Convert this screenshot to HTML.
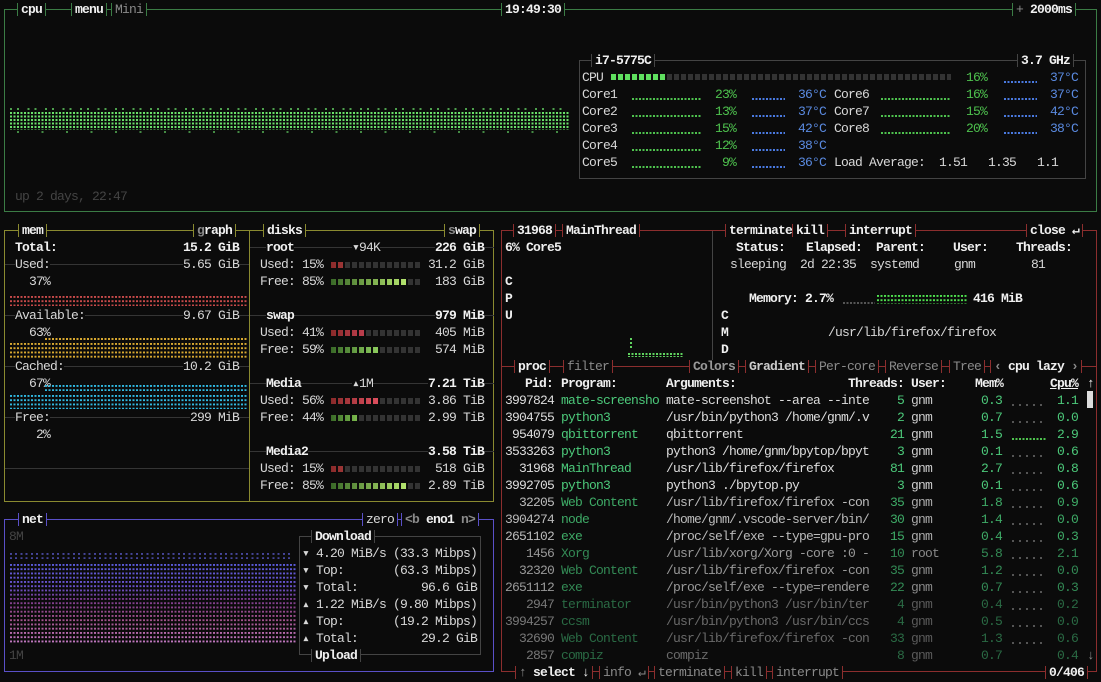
<!DOCTYPE html>
<html><head><meta charset="utf-8"><style>
*{margin:0;padding:0;box-sizing:border-box}
body{width:1101px;height:682px;background:#0b0b0b;overflow:hidden;position:relative;font-family:"Liberation Mono","DejaVu Sans Mono",monospace;font-size:13px;letter-spacing:-0.8px;color:#d8d8d8}
div,span.a{position:absolute;white-space:pre;line-height:17px}
.b{font-weight:bold;color:#f0f0f0}
.g{color:#8a8a8a}
.dg{color:#444}
.box{border:1px solid;}
.tt{position:absolute;height:13px;line-height:13px;margin-top:2px;padding:0 3px;background:#0b0b0b;border-left:1px solid;border-right:1px solid;white-space:pre}
.cg{border-color:#3b7c45}.my{border-color:#8a8a30}.nb{border-color:#5a50c8}.pr{border-color:#8c2e2e}
.hl{height:1px;background:#353535}
.dots{-webkit-mask:linear-gradient(#000 0 2px,transparent 2px) 0 0/100% 4.25px;}
.sq{-webkit-mask:linear-gradient(90deg,#000 0 5px,transparent 5px) 0 0/7px 100%;height:6px}
.bd{height:2px;-webkit-mask:linear-gradient(90deg,#000 0 2px,transparent 2px) 0 0/3.5px 100%}
.gr{color:#4ec24e}.bl{color:#5a8ae0}
</style></head><body>

<!-- CPU box -->
<div class="box cg" style="left:4px;top:9px;width:1093px;height:203px"></div>
<span class="tt cg b" style="left:17px;top:1px">cpu</span>
<span class="tt cg b" style="left:71px;top:1px">menu</span>
<span class="tt cg g" style="left:111px;top:1px">Mini</span>
<span class="tt cg b" style="left:501px;top:1px">19:49:30</span>
<span class="tt cg b" style="left:1012px;top:1px"><span class="g" style="font-weight:normal">+</span> 2000ms</span>
<div class="dots" style="left:10px;top:112px;width:560px;height:18px;background:linear-gradient(90deg,#6ae06a 0 2px,transparent 2px) 0 0/3.5px 100%;-webkit-mask:linear-gradient(#000 0 2px,transparent 2px) 0 0/100% 3.5px"></div>
<div class="dots" style="left:10px;top:108px;width:560px;height:3px;opacity:.7;background:linear-gradient(90deg,#6ae06a 0 2px,transparent 2px 7px,#6ae06a 7px 9px,transparent 9px) 0 0/17.5px 100%"></div>
<div class="dots" style="left:10px;top:131px;width:560px;height:3px;opacity:.6;background:linear-gradient(90deg,transparent 0 7px,#6ae06a 7px 9px,transparent 9px) 0 0/24.5px 100%"></div>
<div class="dg" style="left:15px;top:188px">up 2 days, 22:47</div>

<div class="box" style="border-color:#444;left:579px;top:60px;width:507px;height:119px"></div>
<span class="tt b" style="border-color:#444;left:591px;top:52px">i7-5775C</span>
<span class="tt b" style="border-color:#444;left:1017px;top:52px">3.7 GHz</span>
<div style="left:582px;top:69px">CPU</div>
<div class="sq" style="left:611px;top:74px;width:340px;background:linear-gradient(90deg,#5fe05f 0 56px,#333 56px)"></div>
<div class="gr" style="left:966px;top:69px">16%</div>
<div class="bd" style="left:1004px;top:81px;width:33px;background:#4a7ae0"></div>
<div class="bl" style="left:1050px;top:69px">37°C</div>

<div style="left:582px;top:86px">Core1
Core2
Core3
Core4
Core5</div>
<div style="left:834px;top:86px">Core6
Core7
Core8</div>
<div class="bd" style="left:632px;top:98px;width:70px;background:#4ec24e"></div>
<div class="bd" style="left:632px;top:115px;width:70px;background:#4ec24e"></div>
<div class="bd" style="left:632px;top:132px;width:70px;background:#4ec24e"></div>
<div class="bd" style="left:632px;top:149px;width:70px;background:#4ec24e"></div>
<div class="bd" style="left:632px;top:166px;width:70px;background:#4ec24e"></div>
<div class="bd" style="left:881px;top:98px;width:70px;background:#4ec24e"></div>
<div class="bd" style="left:881px;top:115px;width:70px;background:#4ec24e"></div>
<div class="bd" style="left:881px;top:132px;width:70px;background:#4ec24e"></div>
<div class="gr" style="left:715px;top:86px">23%
13%
15%
12%
 9%</div>
<div class="gr" style="left:966px;top:86px">16%
15%
20%</div>
<div class="bd" style="left:752px;top:98px;width:33px;background:#4a7ae0"></div>
<div class="bd" style="left:752px;top:115px;width:33px;background:#4a7ae0"></div>
<div class="bd" style="left:752px;top:132px;width:33px;background:#4a7ae0"></div>
<div class="bd" style="left:752px;top:149px;width:33px;background:#4a7ae0"></div>
<div class="bd" style="left:752px;top:166px;width:33px;background:#4a7ae0"></div>
<div class="bd" style="left:1004px;top:98px;width:33px;background:#4a7ae0"></div>
<div class="bd" style="left:1004px;top:115px;width:33px;background:#4a7ae0"></div>
<div class="bd" style="left:1004px;top:132px;width:33px;background:#4a7ae0"></div>
<div class="bl" style="left:798px;top:86px">36°C
37°C
42°C
38°C
36°C</div>
<div class="bl" style="left:1050px;top:86px">37°C
42°C
38°C</div>
<div style="left:834px;top:154px">Load Average:  1.51   1.35   1.1</div>

<!-- MEM box -->
<div class="box my" style="left:4px;top:230px;width:490px;height:272px"></div>
<div style="left:249px;top:230px;width:1px;height:272px;background:#8a8a30"></div>
<span class="tt my b" style="left:18px;top:222px">mem</span>
<span class="tt my b" style="left:193px;top:222px"><span class="g">g</span>raph</span>
<span class="tt my b" style="left:263px;top:222px">disks</span>
<span class="tt my b" style="left:444px;top:222px"><span class="g">s</span>wap</span>
<div class="hl" style="left:5px;top:264px;width:244px"></div>
<div class="hl" style="left:5px;top:315px;width:244px"></div>
<div class="hl" style="left:5px;top:366px;width:244px"></div>
<div class="hl" style="left:5px;top:417px;width:244px"></div>
<div class="hl" style="left:5px;top:468px;width:244px"></div>
<div class="b" style="left:15px;top:239px">Total:</div><div class="b" style="right:862px;top:239px">15.2 GiB</div>
<div style="left:15px;top:256px;background:#0b0b0b">Used:</div><div style="right:862px;top:256px;background:#0b0b0b">5.65 GiB</div>
<div style="left:22px;top:273px"> 37%</div>
<div class="dots" style="left:10px;top:296px;width:238px;height:10px;background:linear-gradient(90deg,#c84a4a 0 2px,transparent 2px) 0 0/3.5px 100%"></div>
<div style="left:15px;top:307px;background:#0b0b0b">Available:</div><div style="right:862px;top:307px;background:#0b0b0b">9.67 GiB</div>
<div style="left:22px;top:324px"> 63%</div>
<div class="dots" style="left:45px;top:338px;width:203px;height:2px;background:linear-gradient(90deg,#d8a830 0 2px,transparent 2px) 0 0/3.5px 100%"></div>
<div class="dots" style="left:10px;top:343px;width:238px;height:15px;background:linear-gradient(90deg,#d8a830 0 2px,transparent 2px) 0 0/3.5px 100%"></div>
<div style="left:15px;top:358px;background:#0b0b0b">Cached:</div><div style="right:862px;top:358px;background:#0b0b0b">10.2 GiB</div>
<div style="left:22px;top:375px"> 67%</div>
<div class="dots" style="left:45px;top:385px;width:203px;height:6px;background:linear-gradient(90deg,#30b8e0 0 2px,transparent 2px) 0 0/3.5px 100%"></div>
<div class="dots" style="left:10px;top:395px;width:238px;height:14px;background:linear-gradient(90deg,#30b8e0 0 2px,transparent 2px) 0 0/3.5px 100%"></div>
<div style="left:15px;top:409px;background:#0b0b0b">Free:</div><div style="right:862px;top:409px;background:#0b0b0b">299 MiB</div>
<div style="left:22px;top:426px">  2%</div>

<!-- disks -->
<div class="hl" style="left:250px;top:247px;width:244px"></div>
<div class="hl" style="left:250px;top:315px;width:244px"></div>
<div class="hl" style="left:250px;top:383px;width:244px"></div>
<div class="hl" style="left:250px;top:451px;width:244px"></div>
<div class="b" style="left:266px;top:239px;background:#0b0b0b">root</div><div style="left:352px;top:239px;background:#0b0b0b">▾94K</div><div class="b" style="right:617px;top:239px;background:#0b0b0b">226 GiB</div>
<div class="b" style="left:266px;top:307px;background:#0b0b0b">swap</div><div class="b" style="right:617px;top:307px;background:#0b0b0b">979 MiB</div>
<div class="b" style="left:266px;top:375px;background:#0b0b0b">Media</div><div style="left:352px;top:375px;background:#0b0b0b">▴1M</div><div class="b" style="right:617px;top:375px;background:#0b0b0b">7.21 TiB</div>
<div class="b" style="left:266px;top:443px;background:#0b0b0b">Media2</div><div class="b" style="right:617px;top:443px;background:#0b0b0b">3.58 TiB</div>
<div style="left:260px;top:256px">Used: 15%
Free: 85%</div>
<div style="left:260px;top:324px">Used: 41%
Free: 59%</div>
<div style="left:260px;top:392px">Used: 56%
Free: 44%</div>
<div style="left:260px;top:460px">Used: 15%
Free: 85%</div>
<div style="right:617px;top:256px;text-align:right">31.2 GiB
 183 GiB</div>
<div style="right:617px;top:324px;text-align:right">405 MiB
574 MiB</div>
<div style="right:617px;top:392px;text-align:right">3.86 TiB
2.99 TiB</div>
<div style="right:617px;top:460px;text-align:right">518 GiB
2.89 TiB</div>
<div class="sq" style="left:331px;top:262px;width:89px;background:linear-gradient(90deg,#8a2a2a 0,#a03838 14px,#333 14px)"></div>
<div class="sq" style="left:331px;top:279px;width:89px;background:linear-gradient(90deg,#3a6a28 0,#b8e870 77px,#333 77px)"></div>
<div class="sq" style="left:331px;top:330px;width:89px;background:linear-gradient(90deg,#8a2a2a 0,#c04050 35px,#333 35px)"></div>
<div class="sq" style="left:331px;top:347px;width:89px;background:linear-gradient(90deg,#3a6a28 0,#90d060 49px,#333 49px)"></div>
<div class="sq" style="left:331px;top:398px;width:89px;background:linear-gradient(90deg,#8a2a2a 0,#e05060 49px,#333 49px)"></div>
<div class="sq" style="left:331px;top:415px;width:89px;background:linear-gradient(90deg,#3a6a28 0,#80c050 28px,#333 28px)"></div>
<div class="sq" style="left:331px;top:466px;width:89px;background:linear-gradient(90deg,#8a2a2a 0,#a03838 14px,#333 14px)"></div>
<div class="sq" style="left:331px;top:483px;width:89px;background:linear-gradient(90deg,#3a6a28 0,#b8e870 77px,#333 77px)"></div>

<!-- NET box -->
<div class="box nb" style="left:4px;top:519px;width:490px;height:153px"></div>
<span class="tt nb b" style="left:18px;top:511px">net</span>
<span class="tt nb" style="left:362px;top:511px">zero</span>
<span class="tt nb b" style="left:401px;top:511px"><span class="g">&lt;b</span> eno1 <span class="g">n&gt;</span></span>
<div class="dg" style="left:9px;top:528px">8M</div>
<div class="dg" style="left:9px;top:647px">1M</div>
<div class="dots" style="left:10px;top:553px;width:280px;height:6px;opacity:.7;background:linear-gradient(90deg,#6060d8 0 2px,transparent 2px 5px,#6060d8 5px 7px,transparent 7px) 0 0/10.5px 100%"></div>
<div class="dots" style="left:10px;top:564px;width:287px;height:79px;background:linear-gradient(#5a5ad8,#6a50c8 30%,#7a3a8a 45%,#a0508a 70%,#c078c0);-webkit-mask:linear-gradient(#000 0 2px,transparent 2px) 0 0/100% 4.25px,linear-gradient(90deg,#000 0 2px,transparent 2px) 0 0/3.5px 100%;-webkit-mask-composite:source-in;mask-composite:intersect"></div>
<div class="box" style="border-color:#444;left:299px;top:536px;width:182px;height:119px"></div>
<span class="tt b" style="border-color:#444;left:311px;top:528px">Download</span>
<span class="tt b" style="border-color:#444;left:311px;top:647px">Upload</span>
<div style="left:302px;top:545px">▾ 4.20 MiB/s (33.3 Mibps)
▾ Top:       (63.3 Mibps)
▾ Total:         96.6 GiB
▴ 1.22 MiB/s (9.80 Mibps)
▴ Top:       (19.2 Mibps)
▴ Total:         29.2 GiB</div>

<!-- PROC box -->
<div class="box pr" style="left:501px;top:230px;width:596px;height:442px"></div>
<div style="left:502px;top:366px;width:594px;height:1px;background:#8c2e2e"></div>
<div style="left:712px;top:231px;width:1px;height:135px;background:#444"></div>
<span class="tt pr b" style="left:513px;top:222px">31968</span>
<span class="tt pr b" style="left:562px;top:222px">MainThread</span>
<span class="tt pr b" style="left:725px;top:222px">terminate</span>
<span class="tt pr b" style="left:792px;top:222px">kill</span>
<span class="tt pr b" style="left:845px;top:222px">interrupt</span>
<span class="tt pr b" style="left:1026px;top:222px">close ↵</span>
<div class="b" style="left:505px;top:239px">6% Core5</div>
<div class="b" style="left:505px;top:273px">C
P
U</div>
<div class="dots" style="left:628px;top:348px;width:56px;height:9px;background:linear-gradient(90deg,#5fd35f 0 2px,transparent 2px) 0 0/3.5px 100%;-webkit-mask:linear-gradient(transparent 0 5px,#000 5px 7px,transparent 7px 8px,#000 8px)"></div>
<div style="left:630px;top:338px;width:2px;height:10px;background:repeating-linear-gradient(#5fd35f 0 2px,transparent 2px 4px)"></div>
<div class="b" style="left:736px;top:239px">Status:   Elapsed:  Parent:    User:    Threads:</div>
<div style="left:730px;top:256px">sleeping  2d 22:35  systemd     gnm        81</div>
<div class="b" style="left:749px;top:290px">Memory: 2.7%</div>
<div class="bd" style="left:843px;top:302px;width:32px;background:#555"></div>
<div class="dots" style="left:877px;top:295px;width:91px;height:9px;background:linear-gradient(90deg,#4ee04e 0 2px,transparent 2px) 0 0/3.5px 100%"></div>
<div class="b" style="left:973px;top:290px">416 MiB</div>
<div class="b" style="left:721px;top:307px">C
M
D</div>
<div style="left:828px;top:324px">/usr/lib/firefox/firefox</div>

<span class="tt pr b" style="left:514px;top:358px">proc</span>
<span class="tt pr g" style="left:563px;top:358px">filter</span>
<span class="tt pr b" style="left:689px;top:358px;color:#999">Colors</span>
<span class="tt pr b" style="left:745px;top:358px;color:#ccc">Gradient</span>
<span class="tt pr g" style="left:815px;top:358px">Per-core</span>
<span class="tt pr g" style="left:885px;top:358px">Reverse</span>
<span class="tt pr g" style="left:949px;top:358px">Tree</span>
<span class="tt pr b" style="left:990px;top:358px"><span class="g">‹</span> cpu lazy <span class="g">›</span></span>

<div class="b" style="right:548px;top:375px">Pid:</div>
<div class="b" style="left:561px;top:375px">Program:</div>
<div class="b" style="left:666px;top:375px">Arguments:</div>
<div class="b" style="left:848px;top:375px">Threads:</div>
<div class="b" style="left:911px;top:375px">User:</div>
<div class="b" style="left:975px;top:375px">Mem%</div>
<div class="b" style="left:1050px;top:375px"><u>Cpu%</u></div>
<div class="b" style="left:1087px;top:375px">↑</div>
<div style="left:1087px;top:391px;width:6px;height:17px;background:#ddd"></div>
<div style="left:505px;top:392px;color:#ddd">3997824
3904755
 954079
3533263
  31968
3992705</div>
<div style="left:505px;top:494px;color:#bbb">  32205
3904274
2651102</div>
<div style="left:505px;top:545px;color:#999">   1456
  32320
2651112</div>
<div style="left:505px;top:596px;color:#777">   2947
3994257
  32690
   2857</div>
<div style="left:561px;top:392px;color:#4cc97a">mate-screensho
python3
qbittorrent
python3
MainThread
python3</div>
<div style="left:561px;top:494px;color:#3eaa66">Web Content
node
exe</div>
<div style="left:561px;top:545px;color:#338a55">Xorg
Web Content
exe</div>
<div style="left:561px;top:596px;color:#2a6a44">terminator
ccsm
Web Content
compiz</div>
<div style="left:666px;top:392px;color:#ddd">mate-screenshot --area --inte
/usr/bin/python3 /home/gnm/.v
qbittorrent
python3 /home/gnm/bpytop/bpyt
/usr/lib/firefox/firefox
python3 ./bpytop.py</div>
<div style="left:666px;top:494px;color:#bbb">/usr/lib/firefox/firefox -con
/home/gnm/.vscode-server/bin/
/proc/self/exe --type=gpu-pro</div>
<div style="left:666px;top:545px;color:#999">/usr/lib/xorg/Xorg -core :0 -
/usr/lib/firefox/firefox -con
/proc/self/exe --type=rendere</div>
<div style="left:666px;top:596px;color:#6a6a6a">/usr/bin/python3 /usr/bin/ter
/usr/bin/python3 /usr/bin/ccs
/usr/lib/firefox/firefox -con
compiz</div>
<div style="right:197px;top:392px;text-align:right;color:#4cc97a"> 5
 2
21
 3
81
 3</div>
<div style="right:197px;top:494px;text-align:right;color:#3eaa66">35
30
15</div>
<div style="right:197px;top:545px;text-align:right;color:#338a55">10
35
22</div>
<div style="right:197px;top:596px;text-align:right;color:#2a6a44"> 4
 4
33
 8</div>
<div style="left:911px;top:392px;color:#ccc">gnm
gnm
gnm
gnm
gnm
gnm</div>
<div style="left:911px;top:494px;color:#aaa">gnm
gnm
gnm</div>
<div style="left:911px;top:545px;color:#888">root
gnm
gnm</div>
<div style="left:911px;top:596px;color:#5a5a5a">gnm
gnm
gnm
gnm</div>
<div style="left:981px;top:392px;color:#4cc97a">0.3
0.7
1.5
0.1
2.7
0.1</div>
<div style="left:981px;top:494px;color:#3eaa66">1.8
1.4
0.4</div>
<div style="left:981px;top:545px;color:#338a55">5.8
1.2
0.7</div>
<div style="left:981px;top:596px;color:#2a6a44">0.4
0.5
1.3
0.7</div>
<div style="left:1057px;top:392px;color:#4cc97a">1.1
0.0
2.9
0.6
0.8
0.6</div>
<div style="left:1057px;top:494px;color:#3eaa66">0.9
0.0
0.3</div>
<div style="left:1057px;top:545px;color:#338a55">2.1
0.0
0.3</div>
<div style="left:1057px;top:596px;color:#2a6a44">0.2
0.0
0.6
0.4</div>
<div class="g" style="left:1087px;top:647px">↓</div>
<div style="left:1012px;top:404px;width:34px;height:255px;background:repeating-linear-gradient(90deg,#555 0 2px,transparent 2px 7px);-webkit-mask:repeating-linear-gradient(#000 0 2px,transparent 2px 17px)"></div>
<div class="bd" style="left:1012px;top:438px;width:34px;background:#4ec24e"></div>

<span class="tt pr b" style="left:515px;top:664px"><span class="g">↑</span> select ↓</span>
<span class="tt pr g" style="left:599px;top:664px">info ↵</span>
<span class="tt pr g" style="left:654px;top:664px">terminate</span>
<span class="tt pr g" style="left:731px;top:664px">kill</span>
<span class="tt pr g" style="left:772px;top:664px">interrupt</span>
<span class="tt pr b" style="left:1045px;top:664px">0/406</span>
</body></html>
